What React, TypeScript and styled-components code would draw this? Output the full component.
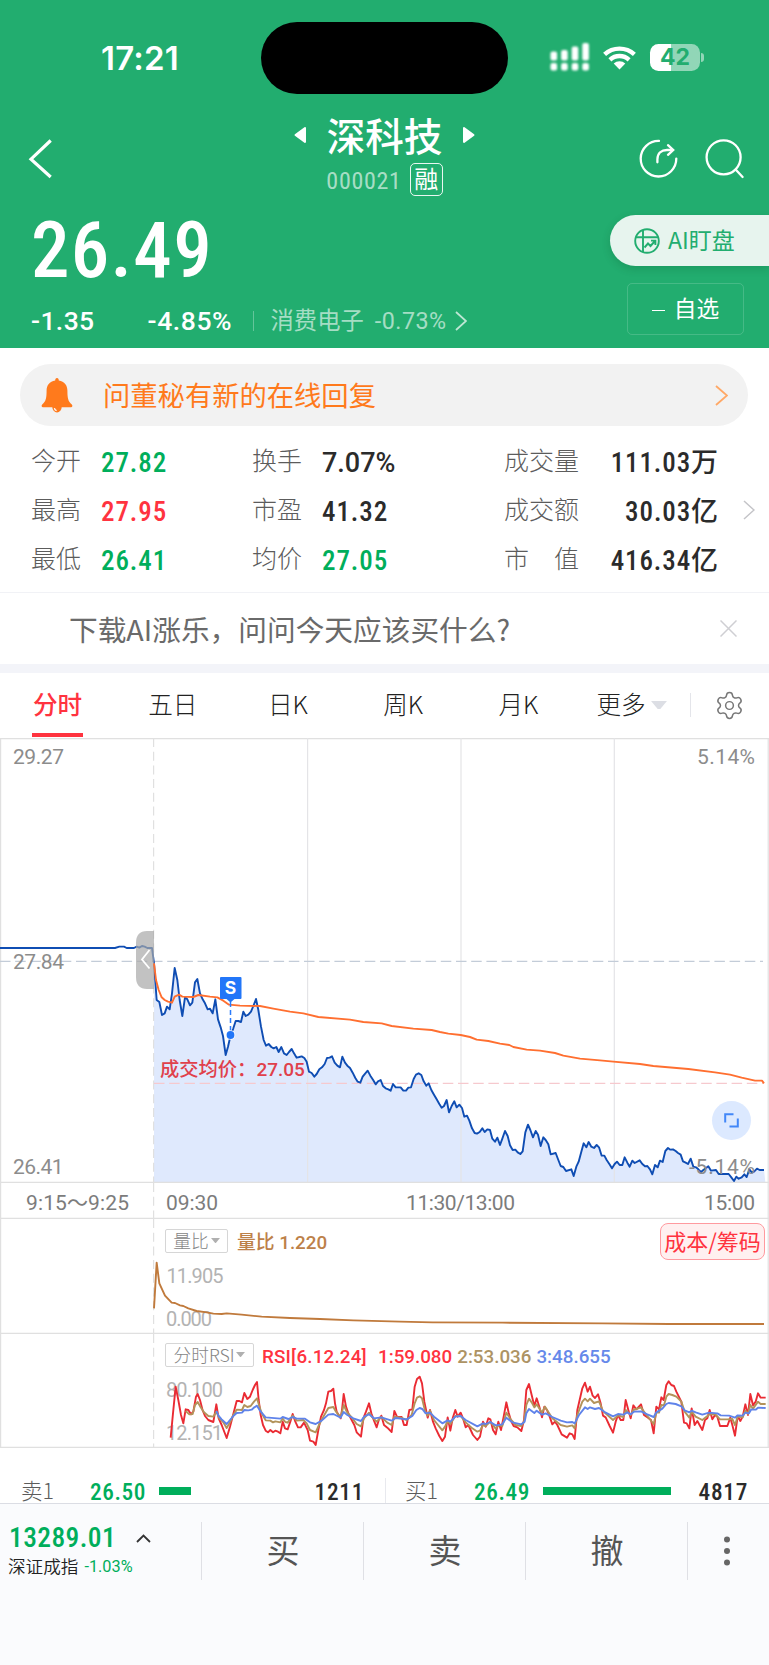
import React from 'react';
import styled, { createGlobalStyle, css } from 'styled-components';
import { Settings } from 'lucide-react';

const GREEN = '#22ad6f';
const UP = '#ff333f';
const DOWN = '#00ae5b';
const CJK = '"Noto Sans CJK SC", sans-serif';
const DIGITS = 'Roboto, "Noto Sans CJK SC", sans-serif';

const GlobalStyle = createGlobalStyle`
  * { box-sizing: border-box; }
  body {
    margin: 0;
    background: #fff;
    font-family: ${CJK};
    font-weight: 300;
    color: #333;
  }
  svg { display: block; flex: none; }
`;

/* ---------- shared text ---------- */

interface NumProps {
  $size: number;
  $color?: string;
  $weight?: number;
  $ls?: number;
  $wide?: boolean;
}

const Num = styled.span<NumProps>`
  font-family: ${DIGITS};
  font-stretch: ${p => (p.$wide ? 100 : 85)}%;
  font-size: ${p => p.$size}px;
  font-weight: ${p => p.$weight ?? 500};
  letter-spacing: ${p => p.$ls ?? 0.8}px;
  color: ${p => p.$color ?? 'inherit'};
  line-height: 1;
  white-space: nowrap;
`;

/* ---------- layout ---------- */

const Page = styled.div`
  width: 769px;
  height: 1665px;
  display: flex;
  flex-direction: column;
  overflow: hidden;
  background: #fff;
`;

const Header = styled.header`
  height: 348px;
  flex: none;
  background: ${GREEN};
  color: #fff;
`;

const StatusBar = styled.div`
  height: 116px;
  display: flex;
  align-items: center;
  padding-left: 101px;
`;

const Clock = styled.div`
  width: 160px;
  font: 600 33px/1 Inter, sans-serif;
  letter-spacing: 0.2px;
`;

const Island = styled.div`
  width: 247px;
  height: 72px;
  border-radius: 36px;
  background: #000;
`;

const Indicators = styled.div`
  display: flex;
  align-items: center;
  gap: 12px;
  margin: -1px 0 0 41px;
`;

const Battery = styled.div`
  position: relative;
  width: 50px;
  height: 27px;
  margin-left: 2px;
  border-radius: 8.5px;
  background: linear-gradient(90deg, #fff 43%, rgba(255, 255, 255, 0.5) 43%);
  color: ${GREEN};
  font: 700 23px/27px Inter, sans-serif;
  text-align: center;
  &::after {
    content: '';
    position: absolute;
    right: -4px;
    top: 9px;
    width: 3px;
    height: 9px;
    border-radius: 0 3px 3px 0;
    background: rgba(255, 255, 255, 0.5);
  }
`;

const NavBar = styled.nav`
  height: 86px;
  display: grid;
  grid-template-columns: 1fr auto 1fr;
  align-items: center;
  padding: 0 24px 0 28px;
`;

const NavTitle = styled.div`
  display: flex;
  flex-direction: column;
  align-items: center;
  height: 86px;
  margin-left: -4px;
`;

const TitleRow = styled.div`
  display: flex;
  align-items: center;
  gap: 20px;
  height: 38px;
`;

const Title = styled.h1`
  margin: -2px 0 0;
  font-size: 38.6px;
  line-height: 38px;
  font-weight: 500;
`;

const CodeRow = styled.div`
  display: flex;
  align-items: center;
  gap: 8px;
  height: 46px;
  padding-top: 5px;
`;

const CodeText = styled(Num)`
  margin-top: 2px;
`;

const MarginTag = styled.span`
  width: 33px;
  height: 33px;
  border: 1.3px solid rgba(255, 255, 255, 0.9);
  border-radius: 5px;
  font-size: 24px;
  font-weight: 400;
  line-height: 28px;
  text-align: center;
`;

const NavActions = styled.div`
  display: flex;
  justify-content: flex-end;
  gap: 26px;
`;

const Quote = styled.section`
  display: flex;
  justify-content: space-between;
  height: 146px;
`;

const QuoteMain = styled.div`
  padding-left: 31px;
`;

const Price = styled.div`
  height: 93px;
  padding-top: 5px;
  display: flex;
  align-items: center;
`;

const ChangeRow = styled.div`
  height: 53px;
  display: flex;
  align-items: center;
`;

const ChangePercent = styled(Num)`
  width: 105px;
  margin-left: 53px;
`;

const Sector = styled.div`
  display: flex;
  align-items: center;
  gap: 11px;
  padding-left: 18px;
  position: relative;
  color: rgba(255, 255, 255, 0.6);
  font-size: 23.3px;
  font-weight: 400;
  line-height: 26px;
  &::before {
    content: '';
    position: absolute;
    left: 0;
    top: 1px;
    width: 1.5px;
    height: 20px;
    background: rgba(255, 255, 255, 0.3);
  }
  & > svg { margin-left: -3px; }
`;

const SectorName = styled.span`
  margin-top: -5px;
`;

const QuoteSide = styled.div`
  width: 159px;
  padding-top: 13px;
`;

const AiPill = styled.button`
  display: flex;
  align-items: center;
  gap: 8px;
  width: 159px;
  height: 51px;
  padding: 0 0 0 24px;
  border: 0;
  border-radius: 26px 0 0 26px;
  background: #e7f4ee;
  color: ${GREEN};
  font: 400 23px/48px ${CJK};
  box-shadow: 0 3px 8px rgba(0, 60, 30, 0.18);
  white-space: nowrap;
  & > span { margin-top: -3px; }
`;

const WatchButton = styled.button`
  display: flex;
  justify-content: center;
  align-items: center;
  gap: 9px;
  width: 117px;
  height: 52px;
  margin: 17px 0 0 17px;
  padding: 0;
  border: 1.5px solid rgba(255, 255, 255, 0.16);
  border-radius: 5px;
  background: none;
  color: #fff;
  font: 400 22.7px/46px ${CJK};
  & > span { margin-top: -3px; }
`;

const Dash = styled.i`
  width: 13px;
  height: 1.5px;
  margin-top: 3px;
  background: #fff;
`;

const Notice = styled.div`
  flex: none;
  display: flex;
  align-items: center;
  width: 728px;
  height: 62px;
  margin: 16px 0 0 20px;
  padding: 0 20px 0 21px;
  border-radius: 31px;
  background: #f2f2f2;
  color: #ff7a1c;
  font-size: 27.3px;
  font-weight: 400;
  line-height: 56px;
`;

const NoticeText = styled.span`
  flex: 1;
  margin: -3px 0 0 30px;
  height: 56px;
`;

const Stats = styled.section`
  flex: none;
  display: flex;
  align-items: center;
  height: 167px;
  padding: 4px 0 0 31px;
  border-bottom: 1.5px solid #f1f2f6;
`;

const StatsGrid = styled.div`
  display: grid;
  grid-template-columns: 221px 252px 215px;
  grid-auto-rows: 49px;
  width: 688px;
`;

const Stat = styled.div<{ $spread?: boolean }>`
  display: flex;
  align-items: center;
  gap: 20px;
  ${p => p.$spread && css`justify-content: space-between;`}
`;

const StatLabel = styled.span`
  margin-top: -7px;
  font-size: 25px;
  line-height: 30px;
  color: #5c5c5c;
  white-space: pre;
`;

const StatValue = styled(Num)`
  margin-top: 2px;
`;

const StatChevron = styled.div`
  margin: -3px 0 0 24px;
`;

const Promo = styled.div`
  flex: none;
  display: flex;
  justify-content: space-between;
  align-items: center;
  height: 71px;
  padding: 0 32px 0 69px;
  font-size: 28.7px;
  font-weight: 400;
  line-height: 40px;
  color: #6a6a6a;
  & > span { white-space: nowrap; }
`;

const Band = styled.div`
  flex: none;
  height: 9px;
  background: #f3f4f9;
`;

const Tabs = styled.div`
  flex: none;
  display: flex;
  height: 65px;
`;

const Tab = styled.button<{ $active?: boolean }>`
  position: relative;
  width: 115.2px;
  height: 65px;
  padding: 0 0 5px;
  border: 0;
  background: none;
  font: ${p => (p.$active ? 500 : 300)} 24.6px/50px ${CJK};
  color: ${p => (p.$active ? UP : '#222')};
  ${p => p.$active && css`
    &::after {
      content: '';
      position: absolute;
      left: 32px;
      bottom: 1px;
      width: 51px;
      height: 4px;
      background: ${UP};
    }
  `}
`;

const MoreTab = styled(Tab)`
  display: flex;
  align-items: center;
  gap: 5px;
  width: 114.5px;
  padding-left: 20.5px;
  & > svg { margin-top: 4px; }
`;

const GearCell = styled.div`
  flex: 1;
  display: flex;
  align-items: center;
  align-self: flex-start;
  height: 24px;
  margin-top: 20px;
  padding-left: 22.5px;
  border-left: 1.5px solid #e4e5ea;
  color: #777;
`;

/* ---------- charts ---------- */

const Panel = styled.section<{ $h: number }>`
  position: relative;
  flex: none;
  height: ${p => p.$h}px;
  overflow: hidden;
`;

const AxisText = styled.text<{ $color?: string; $size?: number }>`
  font-family: ${DIGITS};
  font-size: ${p => p.$size ?? 21}px;
  font-weight: 400;
  fill: ${p => p.$color ?? '#8c8c8c'};
`;

const Overlay = styled.div<{ $top: number }>`
  position: absolute;
  left: 165px;
  right: 2px;
  top: ${p => p.$top}px;
  display: flex;
  align-items: center;
  gap: 9px;
`;

const Picker = styled.button<{ $w: number }>`
  display: flex;
  align-items: center;
  justify-content: center;
  gap: 2px;
  width: ${p => p.$w}px;
  height: 24px;
  padding: 0;
  border: 1.3px solid #d6d6d6;
  border-radius: 2px;
  background: #fff;
  color: #858585;
  font: 300 17.7px/20px ${CJK};
  white-space: nowrap;
  & > span { margin-top: -3px; }
`;

const Legend = styled.span<{ $color: string }>`
  font-family: ${DIGITS};
  font-size: 18.8px;
  font-weight: 500;
  letter-spacing: 0;
  line-height: 24px;
  margin: 2px 0 -2px;
  color: ${p => p.$color};
  white-space: nowrap;
`;

const RsiTitle = styled(Legend)`
  width: 107px;
  margin-left: -1px;
  letter-spacing: 0.2px;
`;

const RsiValues = styled.div`
  display: flex;
  gap: 5px;
`;

const CostButton = styled.button`
  position: absolute;
  right: 4px;
  top: 4px;
  width: 105px;
  height: 37px;
  padding: 0 0 3px;
  border: 1.5px solid #ff9a9f;
  border-radius: 8px;
  background: #fff0f0;
  color: ${UP};
  font: 400 22px/31px ${CJK};
  white-space: nowrap;
`;

const CostLabel = styled.div`
  position: absolute;
  left: 160px;
  top: 318px;
  font-size: 19.3px;
  font-weight: 500;
  line-height: 24px;
  color: #e0404b;
`;

const Expand = styled.button`
  position: absolute;
  left: 712px;
  top: 363px;
  display: flex;
  align-items: center;
  justify-content: center;
  width: 39px;
  height: 39px;
  padding: 0;
  border: 0;
  border-radius: 50%;
  background: #dce9ff;
`;

/* ---------- order book and footer ---------- */

const OrderBook = styled.section`
  flex: none;
  display: flex;
  height: 55px;
  padding-top: 30px;
`;

const Order = styled.div<{ $divided?: boolean }>`
  flex: 1;
  display: flex;
  align-items: center;
  height: 25px;
  padding: 4px 21px 0 21px;
  ${p => p.$divided && css`border-left: 1.5px solid #e8e9ee; padding-left: 19px;`}
`;

const OrderSide = styled.span`
  width: 69px;
  margin-top: -5px;
  font-size: 21.5px;
  line-height: 22px;
  color: #5c5c5c;
`;

const OrderBar = styled.i`
  height: 8px;
  margin: 0 auto 4px 13px;
  background: ${DOWN};
`;

const Footer = styled.footer`
  flex: 1;
  display: flex;
  align-items: flex-start;
  padding-top: 18px;
  border-top: 1.5px solid #dbdde4;
  background: #fafbfd;
`;

const IndexCell = styled.div`
  width: 200.5px;
  height: 58px;
  padding: 4px 0 0 9px;
`;

const IndexRow = styled.div<{ $h: number; $gap: number }>`
  display: flex;
  align-items: center;
  gap: ${p => p.$gap}px;
  height: ${p => p.$h}px;
`;

const IndexName = styled.span`
  margin: -3px 0 0 -1px;
  font-size: 17.6px;
  font-weight: 350;
  line-height: 20px;
  color: #222;
`;

const Action = styled.button`
  width: 162px;
  height: 58px;
  padding: 0;
  border: 0;
  border-left: 1.3px solid #dfe0e5;
  background: none;
  color: #555;
  font: 400 33px/50px ${CJK};
  & > span { display: block; margin: -5px 0 0 2px; }
`;

const Menu = styled.button`
  flex: 1;
  height: 58px;
  padding: 0 0 0 35px;
  border: 0;
  border-left: 1.3px solid #dfe0e5;
  background: none;
`;

/* ---------- icons ---------- */

const Chevron = ({ w, h, color, stroke = 1.8 }: { w: number; h: number; color: string; stroke?: number }) => (
  <svg width={w} height={h} fill="none" stroke={color} strokeWidth={stroke}>
    <path d={`M1 1L${w - 1} ${h / 2}L1 ${h - 1}`} />
  </svg>
);

const SignalIcon = () => (
  <svg width="42" height="32" fill="#fff" style={{ filter: 'blur(1.3px)' }}>
    {[0, 1, 2, 3].map(i => {
      const top = [9.5, 8, 4.5, 1][i];
      return (
        <g key={i}>
          <rect x={1.5 + i * 10.6} y={top} width="6.6" height={18.5 - top} rx="2" />
          <rect x={1.5 + i * 10.6} y="21" width="6.6" height="7.4" rx="2" />
        </g>
      );
    })}
  </svg>
);

const WifiIcon = () => (
  <svg width="33" height="25" viewBox="0 0 33 25" fill="none" stroke="#fff" strokeWidth="4.4">
    <path d="M1.6 9.4A22 22 0 0 1 31.4 9.4" />
    <path d="M6.9 14.8A14.2 14.2 0 0 1 26.1 14.8" />
    <path d="M10.7 18.6A8.4 8.4 0 0 1 22.3 18.6L16.5 24.6Z" fill="#fff" stroke="none" />
  </svg>
);

const Triangle = ({ flip }: { flip?: boolean }) => (
  <svg width="13" height="18" viewBox="0 0 13 18" fill="#fff" stroke="#fff" strokeWidth="2" strokeLinejoin="round">
    <path d={flip ? 'M2 2L11.5 9L2 16Z' : 'M11 2L1.5 9L11 16Z'} />
  </svg>
);

const ShareIcon = () => (
  <svg width="40" height="40" viewBox="0 0 40 40" fill="none" stroke="#fff" strokeWidth="2.3" strokeLinecap="round">
    <path d="M20 1.9A17.8 17.8 0 1 0 37.3 19.6" />
    <path d="M18.4 23.3V20.5C18.4 14 22.5 11 28 11H33.5" />
    <path d="M29 6.2L34.2 11L29 15.8" />
  </svg>
);

const SearchIcon = () => (
  <svg width="40" height="40" viewBox="0 0 40 40" fill="none" stroke="#fff" strokeWidth="2.3" strokeLinecap="round">
    <circle cx="18.6" cy="18.3" r="17" />
    <path d="M30.6 30.5L37.6 38" />
  </svg>
);

const AiIcon = () => (
  <svg width="26" height="26" viewBox="0 0 26 26" fill="none" stroke={GREEN} strokeWidth="1.9">
    <circle cx="13" cy="13" r="11.8" />
    <path d="M2 9.3H24M9 2V24" />
    <path d="M10.5 19.5L14 15.5L16.5 18L21 13M17 12.6H21.4V17" />
  </svg>
);

const Bell = () => (
  <svg width="32" height="35" viewBox="0 0 32 35" fill="#ff7a1c">
    <path d="M16 0C17.2 0 17.8 1 17.8 2.4C23.5 3.4 26.4 7.3 26.4 12.4C26.4 19.5 27 23.5 30.8 26.4C31.9 27.5 31.4 29.2 30 29.2H2C.6 29.2 .1 27.5 1.2 26.4C5 23.5 5.6 19.5 5.6 12.4C5.6 7.3 8.5 3.4 14.2 2.4C14.2 1 14.8 0 16 0Z" />
    <path d="M11.3 29H20.7A4.7 5.4 0 0 1 11.3 29Z" />
    <path d="M13.4 30.2A3 3 0 0 0 15.6 32.6" fill="none" stroke="#fff" strokeWidth="1.3" />
  </svg>
);

const Caret = ({ w, color }: { w: number; color: string }) => (
  <svg width={w} height={w * 0.56} viewBox="0 0 16 9" fill={color}>
    <path d="M0 0H16L9 8.4Q8 9.3 7 8.4Z" />
  </svg>
);

/* ---------- series ---------- */

type Point = [number, number];

const parse = (s: string, dx = 0, dy = 0): Point[] =>
  s.trim().split(/\s+/).map(p => {
    const [x, y] = p.split(',').map(Number);
    return [x + dx, y + dy] as Point;
  });

const toPath = (pts: Point[]) => 'M' + pts.map(p => p.join(' ')).join('L');

const AUCTION = parse('-390,114 -45,114 -32,110 -18,110 -10,114 0,114 12,114 20,110 28,113 36,108 44,110 52,114 66,114 72,160');

const PRICE = [
  ...parse(`72,160 80,270 88,276 96,315 104,310 111,290 119,298 126,250 134,174 142,210 149,270 157,318 165,262
    172,268 180,286 187,278 195,217 202,207 210,250 218,268 225,280 233,298 240,296 248,310 256,268 264,328
    272,352 279,378 287,435 294,410 302,375 310,355 317,333 325,333 333,336 340,305 347,318 355,314 363,305
    370,288 378,267 385,300 393,350 401,390 408,407 416,402 424,411 431,415 439,411 446,426 454,411 462,430
    470,435 477,426 485,417 492,430 500,443 508,441 515,439 523,444 530,455 537,485 545,489 553,500 560,492
    568,478 576,472 584,462 591,444 599,443 606,439 614,458 622,467 630,472 637,440 645,458 652,467 660,474
    668,488 676,504 683,515 691,518 698,500 706,490 713,482 721,497 729,509 737,523 744,514 752,510 759,528
    767,535 775,538 782,542 789,522 797,532 812,532 820,542 828,542 835,533 843,532 851,507 858,494 866,490
    874,495 881,514 889,527 896,520 904,540 912,554 920,568 928,582 935,593`),
  ...parse(`12,438 20,420 27,457 35,438 43,424 50,442 58,434 66,444 73,470 81,467 88,482 96,505 104,519 111,521
    119,516 127,505 134,516 142,508 150,510 157,536 165,545 172,533 180,555 187,536 195,513 203,528 210,556
    218,570 226,569 233,577 241,582 248,574 256,517 264,494 271,510 279,532 287,513 294,524 302,558 310,532
    317,540 325,553 332,583 347,579 355,600 362,618 370,621 378,633 394,628 401,648 409,620 416,605 424,575
    431,550 439,562 446,546 454,560 462,564 470,555 477,562 485,587 493,587 500,600 508,612 516,625 524,612
    531,605 539,615 547,615 554,592 562,608 569,620 577,602 584,609 599,601 607,612 615,619 622,618 630,628
    637,643 645,615 653,622 660,602 668,606 676,573 684,564 691,569 699,568 707,573 714,579 722,584 729,604
    737,608 744,612 752,596 760,620 768,622 775,628 783,636 790,630 805,619 813,632 828,630 836,642 866,642
    874,652 882,663 889,650 896,656 905,652 913,643 920,651 928,628 936,638 943,634 951,626 959,630 972,630`, 930, 150),
];

const AVERAGE = [
  ...parse(`72,160 78,210 86,240 95,262 104,270 114,275 126,278 134,260 147,254 157,260 190,261 205,255 240,260
    262,262 280,272 297,284 330,287 390,288 430,296 480,305 520,310 565,321 660,329 700,336 755,340 785,348
    850,356 905,360`),
  ...parse(`0,216 25,221 62,225 90,231 110,239 145,243 180,251 208,255 220,261 260,269 300,272 345,279 370,287
    420,296 480,301 520,305 600,312 640,318 745,327 825,337 870,344 905,353 945,362 966,362 972,370`, 930, 150),
];

const VOLUME_RATIO = [
  ...parse(`462,415 470,278 478,340 495,377 515,398 525,399 540,406 550,408 565,415 590,423 620,427 640,431
    665,432 680,430 725,434 785,440 870,444 960,447 1060,451`),
  ...parse('93,455 190,457 400,458 700,460 900,462 1185,462', 1107),
];

const RSI6 = [
  ...parse(`512,803 519,730 527,650 535,690 543,735 550,760 557,718 565,720 573,733 580,725 588,680 593,672
    600,690 607,718 615,738 625,750 640,756 649,703 656,745 665,765 680,804 690,770 700,732 710,693 718,693
    726,697 733,669 742,687 750,680 758,660 765,645 771,636 776,690 782,735 789,765 797,782 804,787 811,780
    819,787 826,782 834,785 841,790 848,755 855,775 863,778 871,755 878,732 886,755 894,772 902,772 912,758
    923,780 930,812 940,815 947,825 955,780 963,740 972,720 978,700 985,665 993,663 1000,656 1005,700
    1010,725 1022,745 1026,720 1031,672 1038,710 1046,733 1055,750 1063,765 1070,787 1083,800 1090,745
    1098,725`),
  ...parse(`0,700 7,730 15,752 23,772 30,748 37,737 45,765 55,773 68,786 76,723 84,740 98,741 105,765 113,765
    121,720 130,718 137,650 144,627 152,620 159,640 166,695 176,743 183,720 192,755 200,775 211,798 220,813
    228,800 236,742 244,782 251,745 259,720 266,740 275,728 282,745 290,772 298,765 312,795 325,810 333,800
    342,755 350,770 358,745 364,748 372,780 380,793 388,755 396,780 404,740 412,697 419,728 427,755 434,768
    445,772 457,783 465,750 472,660 480,642 488,675 496,708 503,685 511,710 519,742 526,710 534,720 542,740
    550,763 558,755 565,765 578,793 594,803 602,790 610,793 617,807 625,720 640,655 648,638 656,665 663,650
    671,677 678,684 687,673 695,700 702,737 710,742 722,768 732,788 740,755 747,735 755,750 763,750 770,690
    778,720 785,745 793,706 802,718 816,703 825,735 835,742 846,750 854,790 862,710 870,718 877,682 884,690
    892,645 899,634 907,645 915,648 922,665 937,695 945,758 953,760 961,775 968,715 977,765 985,753 1000,780
    1008,750 1015,745 1022,720 1030,748 1038,735 1045,740 1053,768 1075,768 1084,743 1090,765 1098,797
    1106,738 1114,753 1121,740 1129,703 1137,735 1144,672 1152,706 1160,695 1167,670 1175,683 1190,683`, 1107),
];

const RSI12 = [
  ...parse(`557,723 568,733 578,732 585,705 593,696 602,712 612,727 625,738 640,740 649,725 658,745 670,757
    680,774 690,757 700,735 710,719 726,720 733,705 742,711 752,708 762,695 771,685 777,705 785,730 797,751
    811,752 819,757 826,754 841,757 848,746 856,756 863,758 878,737 890,752 910,750 920,760 930,780 947,787
    957,765 970,740 985,714 1000,711 1008,725 1022,742 1031,705 1040,725 1055,742 1070,762 1083,769 1092,745`),
  ...parse(`0,728 10,742 23,755 37,741 55,758 68,765 76,740 98,744 113,750 128,735 137,700 144,683 152,679
    159,685 168,722 176,737 183,722 195,750 220,781 228,770 236,753 244,762 259,738 275,738 290,757 310,775
    325,785 333,782 342,765 350,768 364,755 380,776 390,765 400,768 412,728 425,748 440,765 457,768 465,755
    472,705 480,686 488,697 496,712 503,703 519,728 528,710 550,745 575,765 594,770 610,766 617,775 625,735
    640,695 648,686 656,694 663,686 675,699 690,694 702,723 732,750 747,736 763,741 770,720 785,735 793,720
    816,712 830,732 854,762 862,728 870,728 877,705 885,706 892,680 899,672 910,675 922,680 937,695 947,725
    961,743 968,725 980,740 1000,750 1022,733 1038,732 1053,748 1075,748 1090,747 1098,765 1106,740 1121,742
    1129,722 1137,732 1144,705 1152,716 1167,695 1175,702 1190,702`, 1107),
];

const RSI24 = [
  ...parse(`649,723 656,738 665,748 680,762 690,750 700,738 710,729 726,728 733,720 745,721 755,719 763,712
    771,707 780,722 797,742 841,746 848,741 865,747 878,741 890,746 915,746 930,757 947,762 965,752 985,734
    1000,732 1022,743 1031,726 1042,735 1060,745 1083,753 1092,740`),
  ...parse(`0,733 15,745 37,742 68,752 80,744 113,748 130,738 142,720 152,714 160,717 170,730 183,728 195,740
    220,760 236,751 244,755 259,740 275,738 290,750 325,769 342,760 350,762 364,756 380,766 400,763 412,743
    430,757 457,763 467,755 472,730 480,717 496,729 503,722 519,734 530,730 550,741 575,752 594,757 610,756
    617,760 630,735 648,712 656,717 663,712 678,717 690,714 710,728 732,739 747,732 763,734 775,727 785,733
    795,725 816,724 835,733 854,741 862,727 880,716 892,702 899,699 920,702 937,709 947,721 961,727 968,722
    980,727 1000,734 1020,728 1045,730 1055,736 1080,737 1098,743 1106,736 1121,737 1129,728 1140,730
    1147,718 1160,719 1167,713 1190,714`, 1107),
];

const Curve = ({ points, color, width = 1.9 }: { points: Point[]; color: string; width?: number }) => (
  <path d={toPath(points)} fill="none" stroke={color} strokeWidth={width * 3} strokeLinejoin="round" />
);

const Frame = ({ h }: { h: number }) => (
  <g stroke="#e0e0e0" strokeWidth="1.2">
    <path d={`M.6 0V${h}M768.2 0V${h}`} />
    <path d={`M153.6 0V${h}`} strokeDasharray="9 4.7" />
    <path d={`M0 ${h - 0.6}H769`} />
  </g>
);

const PriceChart = () => (
  <Panel $h={445}>
    <svg width="769" height="445">
      <path d="M0 .6H769" stroke="#e0e0e0" strokeWidth="1.2" />
      <g transform="translate(130 172) scale(.333333)">
        <path d={`${toPath(PRICE)}L1906 817L72 817Z`} fill="#dfe9fd" />
      </g>
      <path d="M307.6 0V445M461 0V445M614.3 0V445" stroke="#e4e4e7" strokeWidth="1.2" />
      <Frame h={445} />
      <path d="M0 223.4H763" stroke="#c3ccd8" strokeWidth="1.2" strokeDasharray="10.5 4.7" />
      <path d="M154 345.4H763" stroke="#f6c9ce" strokeWidth="1.3" strokeDasharray="10.5 4.7" />
      <g transform="translate(130 172) scale(.333333)">
        <Curve points={AUCTION} color="#0f4db3" />
        <Curve points={PRICE} color="#0f4db3" />
      </g>
      <path d="M154 193H147Q136 193 136 205V239Q136 251 147 251H154Z" fill="#a8a8a8" fillOpacity=".7" />
      <path d="M149.5 212L142 221.5L149.5 230.5" fill="none" stroke="#fff" strokeWidth="1.8" />
      <g transform="translate(130 172) scale(.333333)">
        <Curve points={AVERAGE} color="#ff6f30" />
      </g>
      <path d="M230.5 264V296" stroke="#2b7bfb" strokeWidth="1.5" strokeDasharray="5 3" />
      <circle cx="230.5" cy="297" r="4.8" fill="#fff" />
      <circle cx="230.5" cy="297" r="3.9" fill="#2276f8" />
      <path d="M221 239H240.5Q241.5 239 241.5 240V260Q241.5 261 240.5 261H234.5L230.5 264.5L226.5 261H221Q220 261 220 260V240Q220 239 221 239Z" fill="#2276f8" />
      <text x="230.6" y="256.4" textAnchor="middle" fill="#fff" fontFamily="Inter" fontWeight="700" fontSize="17.5">S</text>
      <AxisText x="13" y="25.8" textLength="51">29.27</AxisText>
      <AxisText x="13" y="231" textLength="51">27.84</AxisText>
      <AxisText x="13" y="436" textLength="50.5">26.41</AxisText>
      <AxisText x="697" y="25.8" textLength="58">5.14%</AxisText>
      <AxisText x="689" y="436" textLength="66">-5.14%</AxisText>
    </svg>
    <CostLabel>成交均价：<Num $size={19} $weight={500} $ls={0} $wide>27.05</Num></CostLabel>
    <Expand aria-label="全屏">
      <svg width="15" height="15" fill="none" stroke="#4287f8" strokeWidth="2">
        <path d="M1.2 9.5V1.2H9.5M5.5 13.6H13.8V5.5" />
      </svg>
    </Expand>
  </Panel>
);

const TimeAxis = () => (
  <Panel $h={36}>
    <svg width="769" height="36">
      <Frame h={36} />
      <AxisText x="26" y="26.6" textLength="103" $color="#7c7c7c">9:15～9:25</AxisText>
      <AxisText x="166" y="26.6" textLength="52" $color="#7c7c7c">09:30</AxisText>
      <AxisText x="406" y="26.6" textLength="109" $color="#7c7c7c">11:30/13:00</AxisText>
      <AxisText x="704" y="26.6" textLength="51" $color="#7c7c7c">15:00</AxisText>
    </svg>
  </Panel>
);

const VolumeRatioChart = () => (
  <Panel $h={115}>
    <svg width="769" height="115">
      <Frame h={115} />
      <AxisText x="166.5" y="63.5" textLength="57" $size={20} $color="#b3b3b3">11.905</AxisText>
      <AxisText x="166" y="106.5" textLength="46" $size={20} $color="#b3b3b3">0.000</AxisText>
      <g transform="translate(0 -49) scale(.333333)">
        <Curve points={VOLUME_RATIO} color="#c07a3c" />
      </g>
    </svg>
    <Overlay $top={10}>
      <Picker $w={63}><span>量比</span><Caret w={9} color="#b0b0b0" /></Picker>
      <Legend $color="#bd8149">量比 1.220</Legend>
    </Overlay>
    <CostButton>成本/筹码</CostButton>
  </Panel>
);

const RsiChart = () => (
  <Panel $h={114}>
    <svg width="769" height="114">
      <Frame h={114} />
      <AxisText x="166" y="63" textLength="57" $size={20} $color="#b3b3b3">80.100</AxisText>
      <AxisText x="166" y="106" textLength="57" $size={20} $color="#b3b3b3">12.151</AxisText>
      <g transform="translate(0 -164) scale(.333333)">
        <Curve points={RSI6} color="#ea2b33" />
        <Curve points={RSI12} color="#b3935a" />
        <Curve points={RSI24} color="#5f83ea" />
      </g>
    </svg>
    <Overlay $top={9}>
      <Picker $w={89}><span>分时RSI</span><Caret w={9} color="#b0b0b0" /></Picker>
      <RsiTitle $color={UP}>RSI[6.12.24]</RsiTitle>
      <RsiValues>
        <Legend $color={UP}>1:59.080</Legend>
        <Legend $color="#ad9364">2:53.036</Legend>
        <Legend $color="#6689ea">3:48.655</Legend>
      </RsiValues>
    </Overlay>
  </Panel>
);

/* ---------- page ---------- */

const STATS: { label: string; value: string; color?: string; spread?: boolean; wide?: boolean }[] = [
  { label: '今开', value: '27.82', color: DOWN },
  { label: '换手', value: '7.07%', wide: true },
  { label: '成交量', value: '111.03万', spread: true },
  { label: '最高', value: '27.95', color: UP },
  { label: '市盈', value: '41.32' },
  { label: '成交额', value: '30.03亿', spread: true },
  { label: '最低', value: '26.41', color: DOWN },
  { label: '均价', value: '27.05', color: DOWN },
  { label: '市　值', value: '416.34亿', spread: true },
];

const ORDERS = [
  { side: '卖1', price: '26.50', bar: 32, volume: '1211' },
  { side: '买1', price: '26.49', bar: 128, volume: '4817' },
];

export default function App() {
  return (
    <Page>
      <GlobalStyle />
      <Header>
        <StatusBar>
          <Clock>17:21</Clock>
          <Island />
          <Indicators>
            <SignalIcon />
            <WifiIcon />
            <Battery>42</Battery>
          </Indicators>
        </StatusBar>
        <NavBar>
          <svg width="24" height="40" fill="none" stroke="#fff" strokeWidth="3.2">
            <path d="M22.7 1.5L3 20.2L22.7 38" />
          </svg>
          <NavTitle>
            <TitleRow>
              <Triangle />
              <Title>深科技</Title>
              <Triangle flip />
            </TitleRow>
            <CodeRow>
              <CodeText $size={24} $weight={400} $ls={0.7} $color="rgba(255,255,255,.62)">000021</CodeText>
              <MarginTag>融</MarginTag>
            </CodeRow>
          </NavTitle>
          <NavActions>
            <ShareIcon />
            <SearchIcon />
          </NavActions>
        </NavBar>
        <Quote>
          <QuoteMain>
            <Price><Num $size={77} $ls={1.3}>26.49</Num></Price>
            <ChangeRow>
              <Num $size={26.5} $ls={0.4} $wide>-1.35</Num>
              <ChangePercent $size={26.5} $ls={0.6} $wide>-4.85%</ChangePercent>
              <Sector>
                <SectorName>消费电子</SectorName>
                <Num $size={23.3} $weight={400} $ls={0.5} $wide>-0.73%</Num>
                <Chevron w={12} h={20} color="rgba(255,255,255,.7)" />
              </Sector>
            </ChangeRow>
          </QuoteMain>
          <QuoteSide>
            <AiPill><AiIcon /><span>AI盯盘</span></AiPill>
            <WatchButton><Dash /><span>自选</span></WatchButton>
          </QuoteSide>
        </Quote>
      </Header>

      <Notice>
        <Bell />
        <NoticeText>问董秘有新的在线回复</NoticeText>
        <Chevron w={13} h={21} color="#ffa866" />
      </Notice>

      <Stats>
        <StatsGrid>
          {STATS.map(s => (
            <Stat key={s.label} $spread={s.spread}>
              <StatLabel>{s.label}</StatLabel>
              <StatValue $size={27} $color={s.color ?? '#2b2b2b'} $wide={s.wide} $ls={s.wide ? 0 : 0.9}>
                {s.value}
              </StatValue>
            </Stat>
          ))}
        </StatsGrid>
        <StatChevron><Chevron w={12} h={20} color="#c4c4c8" stroke={1.5} /></StatChevron>
      </Stats>

      <Promo>
        <span>下载AI涨乐，问问今天应该买什么?</span>
        <svg width="17" height="17" stroke="#cfcfd3" strokeWidth="1.5">
          <path d="M.5 .5L16.5 16.5M16.5 .5L.5 16.5" />
        </svg>
      </Promo>
      <Band />

      <Tabs>
        <Tab $active>分时</Tab>
        <Tab>五日</Tab>
        <Tab>日K</Tab>
        <Tab>周K</Tab>
        <Tab>月K</Tab>
        <MoreTab>更多<Caret w={16} color="#dcdee4" /></MoreTab>
        <GearCell><Settings size={31} strokeWidth={1.15} /></GearCell>
      </Tabs>

      <PriceChart />
      <TimeAxis />
      <VolumeRatioChart />
      <RsiChart />

      <OrderBook>
        {ORDERS.map((o, i) => (
          <Order key={o.side} $divided={i > 0}>
            <OrderSide>{o.side}</OrderSide>
            <Num $size={23.3} $ls={0.6} $color={DOWN}>{o.price}</Num>
            <OrderBar style={{ width: o.bar }} />
            <Num $size={23.3} $ls={0.7} $color="#2b2b2b">{o.volume}</Num>
          </Order>
        ))}
      </OrderBook>

      <Footer>
        <IndexCell>
          <IndexRow $h={24} $gap={20}>
            <Num $size={27.5} $weight={500} $ls={0.4} $color={DOWN}>13289.01</Num>
            <svg width="15" height="9" fill="none" stroke="#333" strokeWidth="1.8">
              <path d="M1 8L7.5 1.5L14 8" />
            </svg>
          </IndexRow>
          <IndexRow $h={34} $gap={6}>
            <IndexName>深证成指</IndexName>
            <Num $size={16.3} $weight={400} $ls={0} $wide $color={DOWN}>-1.03%</Num>
          </IndexRow>
        </IndexCell>
        <Action><span>买</span></Action>
        <Action><span>卖</span></Action>
        <Action><span>撤</span></Action>
        <Menu aria-label="更多操作">
          <svg width="8" height="32" fill="#666">
            <circle cx="4" cy="4.5" r="3" />
            <circle cx="4" cy="16" r="3" />
            <circle cx="4" cy="27.5" r="3" />
          </svg>
        </Menu>
      </Footer>
    </Page>
  );
}
